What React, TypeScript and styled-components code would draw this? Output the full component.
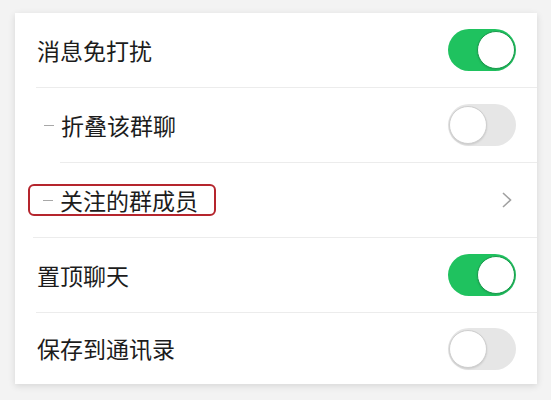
import type { FC } from 'react';
import styled, { createGlobalStyle } from 'styled-components';

const GlobalStyle = createGlobalStyle`
  html, body {
    margin: 0;
    padding: 0;
    background: #f3f3f3;
  }
  body {
    font-family: 'Noto Sans CJK SC', 'Noto Sans', sans-serif;
  }
`;

const Page = styled.div`
  width: 551px;
  height: 400px;
  box-sizing: border-box;
  padding: 13px 14px 0 15px;
`;

const Card = styled.div`
  background: #ffffff;
  box-shadow: 0 2px 7px rgba(0, 0, 0, 0.12);
  display: flex;
  flex-direction: column;
`;

const Row = styled.div<{ $height?: number }>`
  height: ${({ $height = 74 }) => $height}px;
  display: flex;
  align-items: center;
  justify-content: space-between;
  padding: 0 21px 0 22px;
`;

const Divider = styled.div<{ $inset: number }>`
  height: 1px;
  margin-left: ${({ $inset }) => $inset}px;
  background: #ececec;
`;

const Label = styled.span`
  display: flex;
  align-items: center;
  font-size: 23px;
  color: #1c1c1c;
  line-height: 1;
`;

const Dash = styled.span`
  width: 10px;
  height: 1px;
  background: #a8a8a8;
  margin: 0 7px 0 7px;
`;

const Highlight = styled.span`
  display: flex;
  align-items: center;
  height: 28px;
  margin-left: -9px;
  padding: 0 16px 0 11px;
  border: 2px solid #b5252d;
  border-radius: 6px;
  font-size: 23px;
  color: #1c1c1c;
  line-height: 1;
`;

const HighlightDash = styled(Dash)`
  margin-left: 2px;
`;

const Track = styled.span<{ $on: boolean }>`
  display: flex;
  align-items: center;
  justify-content: ${({ $on }) => ($on ? 'flex-end' : 'flex-start')};
  width: 68px;
  height: 42px;
  box-sizing: border-box;
  padding: 0 1px;
  border-radius: 21px;
  background: ${({ $on }) => ($on ? '#1fc25f' : '#e6e6e6')};
`;

const Knob = styled.span<{ $on: boolean }>`
  width: 38px;
  height: 38px;
  box-sizing: border-box;
  border-radius: 50%;
  background: #ffffff;
  border: 1px solid ${({ $on }) => ($on ? '#199a4c' : '#cfcfcf')};
  box-shadow: 0 1px 2px rgba(0, 0, 0, 0.12);
`;

const Chevron = styled.svg`
  width: 12px;
  height: 18px;
  margin-right: 3px;
`;

const Toggle: FC<{ on: boolean }> = ({ on }) => (
  <Track $on={on}>
    <Knob $on={on} />
  </Track>
);

const App: FC = () => (
  <Page>
    <GlobalStyle />
    <Card>
      <Row>
        <Label>消息免打扰</Label>
        <Toggle on />
      </Row>
      <Divider $inset={21} />
      <Row>
        <Label>
          <Dash />
          折叠该群聊
        </Label>
        <Toggle on={false} />
      </Row>
      <Divider $inset={45} />
      <Row>
        <Highlight>
          <HighlightDash />
          关注的群成员
        </Highlight>
        <Chevron viewBox="0 0 12 18">
          <path d="M2 2 L9.5 9 L2 16" fill="none" stroke="#a0a0a0" strokeWidth="1.6" />
        </Chevron>
      </Row>
      <Divider $inset={18} />
      <Row>
        <Label>置顶聊天</Label>
        <Toggle on />
      </Row>
      <Divider $inset={21} />
      <Row $height={71}>
        <Label>保存到通讯录</Label>
        <Toggle on={false} />
      </Row>
    </Card>
  </Page>
);

export default App;
